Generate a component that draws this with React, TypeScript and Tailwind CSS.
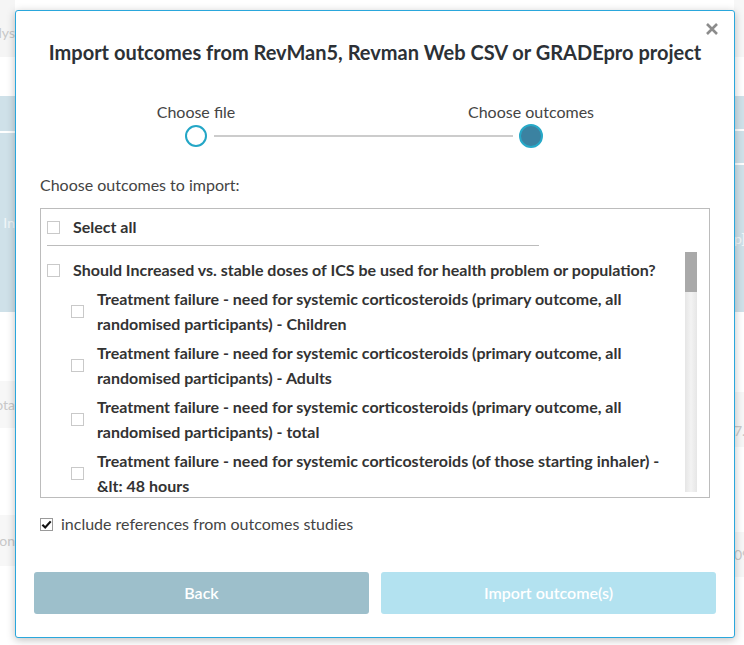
import React from "react";

const F = { fontFamily: "Lato, 'Noto Sans', sans-serif" };

function Box({ className = "" }: { className?: string }) {
  return <span className={`block w-[13px] h-[13px] shrink-0 border border-[#c9c9c9] bg-white ${className}`} />;
}

const outcomes: [string, string][] = [
  ["Treatment failure - need for systemic corticosteroids (primary outcome, all", "randomised participants) - Children"],
  ["Treatment failure - need for systemic corticosteroids (primary outcome, all", "randomised participants) - Adults"],
  ["Treatment failure - need for systemic corticosteroids (primary outcome, all", "randomised participants) - total"],
  ["Treatment failure - need for systemic corticosteroids (of those starting inhaler) -", "&lt: 48 hours"],
];

export default function App() {
  return (
    <div className="relative w-[744px] h-[645px] overflow-hidden bg-white" style={F}>
      {/* background page */}
      <div className="flex h-full">
        <div className="w-[15px] flex flex-col text-[14px]">
          <div className="h-[57px] bg-[#f5f5f5] flex items-end justify-end pb-[14px] whitespace-nowrap text-[#c8c8c8]">Analys</div>
          <div className="h-[39px]" />
          <div className="h-[35px] bg-[#cfe1e9]" />
          <div className="h-[2px]" />
          <div className="h-[179px] bg-[#cfe1e9] flex items-center justify-end whitespace-nowrap text-[#f2f7f9]">In</div>
          <div className="h-[69px]" />
          <div className="h-[47px] bg-[#f7f7f7] flex items-center justify-end whitespace-nowrap text-[#c8c8c8]">Tota</div>
          <div className="h-[87px]" />
          <div className="h-[51px] bg-[#f7f7f7] flex items-center justify-end whitespace-nowrap text-[#c8c8c8]">Non</div>
        </div>
        <div className="flex-1" />
        <div className="w-[10px] flex flex-col text-[14px]">
          <div className="h-[57px] bg-[#f7f7f7]" />
          <div className="h-[39px]" />
          <div className="h-[33px] bg-[#cfe1e9]" />
          <div className="h-[2px]" />
          <div className="h-[32px] bg-[#cfe1e9]" />
          <div className="h-[2px]" />
          <div className="h-[147px] bg-[#cfe1e9] flex items-center justify-start whitespace-nowrap text-[#f2f7f9]">p]</div>
          <div className="h-[80px]" />
          <div className="h-[55px] bg-[#f7f7f7] flex items-end pb-[6px] whitespace-nowrap text-[#c8c8c8]">7.</div>
          <div className="h-[85px]" />
          <div className="h-[45px] bg-[#f7f7f7] flex items-center whitespace-nowrap text-[#c8c8c8]">09</div>
        </div>
      </div>

      {/* modal */}
      <div className="absolute left-[15px] top-[10px] w-[720px] h-[628px] bg-white border border-[#2aa7dc] rounded-[3px] shadow-[0_2px_8px_rgba(0,0,0,0.25)] flex flex-col">
        <button className="absolute right-[13px] top-[9px] w-[18px] h-[18px] flex items-center justify-center">
          <svg viewBox="0 0 14 14" className="w-[14px] h-[14px]">
            <path d="M2 2 L12 12 M12 2 L2 12" stroke="#8c8c8c" strokeWidth="2.6" strokeLinecap="butt" />
          </svg>
        </button>
        <h1 className="pt-[28px] text-center text-[20px] leading-[26px] font-bold text-[#2c3136]">
          Import outcomes from RevMan5, Revman Web CSV or GRADEpro project
        </h1>

        {/* stepper */}
        <div className="mt-[37px] ml-[168px] w-[359px] flex items-end">
          <div className="w-[24px] flex flex-col items-center">
            <span className="whitespace-nowrap text-[16px] leading-[20px] text-[#444]">Choose file</span>
            <span className="mt-[3px] mb-[1px] w-[22px] h-[22px] rounded-full border-[2px] border-[#23a6c6] bg-white" />
          </div>
          <div className="flex-1 h-[2px] bg-[#cccccc] mx-[6px] mb-[11px]" />
          <div className="w-[24px] flex flex-col items-center">
            <span className="whitespace-nowrap text-[16px] leading-[20px] text-[#444]">Choose outcomes</span>
            <span className="mt-[2px] w-[24px] h-[24px] rounded-full border-[2px] border-[#27a9c8] bg-[#3b82a1]" />
          </div>
        </div>

        <div className="mt-[27px] px-[24px] text-[16px] leading-[20px] text-[#444]">Choose outcomes to import:</div>

        {/* list */}
        <div className="mt-[13px] mx-[24px] h-[290px] border border-[#bcbcbc] px-[6px] pt-[6px] flex flex-col text-[16px] text-[#333] font-bold">
          <div className="w-[492px] flex items-center gap-[13px] leading-[24px] pb-[6px] border-b border-[#bcbcbc]">
            <Box />
            <span>Select all</span>
          </div>
          <div className="mt-[6px] h-[240px] flex">
            <div className="flex-1 overflow-hidden pt-[6px]">
              <div className="flex items-center gap-[13px] leading-[24px] whitespace-nowrap">
                <Box />
                <span>Should Increased vs. stable doses of ICS be used for health problem or population?</span>
              </div>
              {outcomes.map(([a, b], i) => (
                <div key={i} className="mt-[5px] pl-[24px] flex items-center gap-[13px] leading-[24.5px] whitespace-nowrap">
                  <Box />
                  <span className="flex flex-col">
                    <span>{a}</span>
                    <span>{b}</span>
                  </span>
                </div>
              ))}
            </div>
            <div className="w-[12px] flex flex-col bg-gradient-to-r from-[#e6e6e6] via-[#f3f3f3] to-[#e6e6e6]">
              <div className="h-[40px] bg-[#a9a9a9]" />
            </div>
            <div className="w-[6px]" />
          </div>
        </div>

        <label className="mt-[16px] px-[24px] flex items-center gap-[8px] text-[16px] leading-[20px] text-[#444]">
          <span className="w-[13px] h-[13px] border border-[#9a9a9a] bg-white flex items-center justify-center">
            <svg viewBox="0 0 12 12" className="w-[11px] h-[11px]">
              <path d="M1.5 6.2 L4.6 9.2 L10.6 2.6" fill="none" stroke="#111" strokeWidth="2.4" />
            </svg>
          </span>
          <span>include references from outcomes studies</span>
        </label>

        <div className="mt-auto mb-[23px] px-[18px] flex gap-[12px]">
          <button className="flex-1 h-[42px] rounded-[3px] bg-[#9dbfcb] text-white text-[16px] font-semibold">Back</button>
          <button className="flex-1 h-[42px] rounded-[3px] bg-[#b3e2f0] text-white text-[16px] font-semibold">Import outcome(s)</button>
        </div>
      </div>
    </div>
  );
}
